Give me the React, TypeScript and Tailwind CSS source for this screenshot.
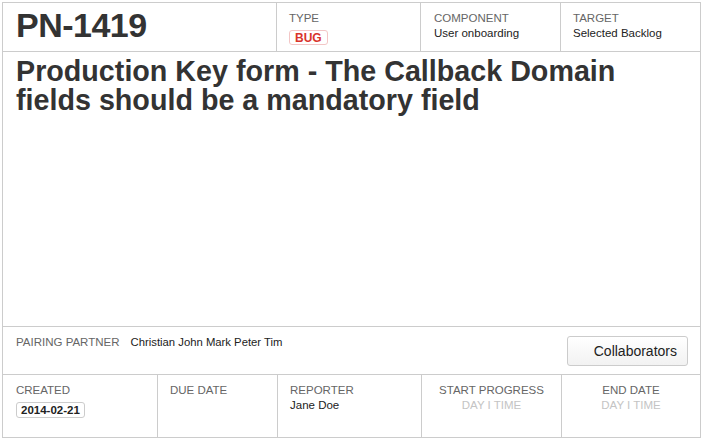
import React from 'react';

const font = { fontFamily: '"Liberation Sans", Arial, sans-serif' };

const Label: React.FC<{ children: React.ReactNode; className?: string }> = ({ children, className = '' }) => (
  <div className={`text-[11.5px] leading-[14px] text-[#666] uppercase ${className}`}>{children}</div>
);

export default function App() {
  return (
    <div className="bg-white w-[704px] h-[441px] pt-[2px] pl-[2px] text-[#333]" style={font}>
      <div className="w-[699px] h-[436px] border border-[#ccc] flex flex-col">
        {/* En-tête */}
        <div className="h-[49px] flex border-b border-[#ccc] shrink-0">
          <div className="w-[274px] border-r border-[#ccc] pl-[13px] pt-[2px]">
            <h1 className="text-[34px] leading-[40px] font-bold tracking-[-0.5px]">PN-1419</h1>
          </div>
          <div className="w-[144px] border-r border-[#ccc] pl-[12px] pt-[8px]">
            <Label>Type</Label>
            <span className="inline-block mt-[3px] px-[5px] h-[15px] leading-[14px] border border-[#f3c6c6] rounded-[3px] text-[12px] font-bold text-[#d9342b]">
              BUG
            </span>
          </div>
          <div className="w-[140px] border-r border-[#ccc] pl-[13px] pt-[8px]">
            <Label>Component</Label>
            <div className="text-[11.5px] leading-[17px] text-[#222]">User onboarding</div>
          </div>
          <div className="flex-1 pl-[12px] pt-[8px]">
            <Label>Target</Label>
            <div className="text-[11.5px] leading-[17px] text-[#222]">Selected Backlog</div>
          </div>
        </div>

        {/* Titre */}
        <div className="flex-1 border-b border-[#ccc] pl-[13px] pt-[5px]">
          <h2 className="text-[28.7px] leading-[29px] font-bold w-[650px]">
            Production Key form - The Callback Domain fields should be a mandatory field
          </h2>
        </div>

        {/* Partenaire */}
        <div className="h-[48px] shrink-0 border-b border-[#ccc] flex items-start justify-between pl-[13px] pr-[12px]">
          <div className="flex items-center gap-[11px] pt-[8px]">
            <Label className="text-[10.5px]">Pairing Partner</Label>
            <span className="text-[11.3px] leading-[14px] text-[#222]">Christian John Mark Peter Tim</span>
          </div>
          <button className="mt-[9px] h-[30px] w-[121px] pl-[24px] pr-[10px] text-[14px] text-[#222] border border-[#ccc] rounded-[3px] bg-gradient-to-b from-white to-[#f2f2f2] text-right">
            Collaborators
          </button>
        </div>

        {/* Dates */}
        <div className="h-[62px] shrink-0 flex">
          <div className="w-[155px] border-r border-[#ccc] pl-[13px] pt-[8px]">
            <Label>Created</Label>
            <span className="inline-block mt-[3px] px-[4px] h-[16px] leading-[15px] border border-[#ccc] rounded-[3px] text-[11.5px] font-bold text-[#222]">
              2014-02-21
            </span>
          </div>
          <div className="w-[120px] border-r border-[#ccc] pl-[12px] pt-[8px]">
            <Label>Due Date</Label>
          </div>
          <div className="w-[144px] border-r border-[#ccc] pl-[12px] pt-[8px]">
            <Label>Reporter</Label>
            <div className="text-[11.5px] leading-[17px] text-[#222]">Jane Doe</div>
          </div>
          <div className="w-[140px] border-r border-[#ccc] pt-[8px] text-center">
            <Label>Start Progress</Label>
            <div className="text-[11.5px] leading-[17px] text-[#c4c4c4]">DAY I TIME</div>
          </div>
          <div className="flex-1 pt-[8px] text-center">
            <Label>End Date</Label>
            <div className="text-[11.5px] leading-[17px] text-[#c4c4c4]">DAY I TIME</div>
          </div>
        </div>
      </div>
    </div>
  );
}
